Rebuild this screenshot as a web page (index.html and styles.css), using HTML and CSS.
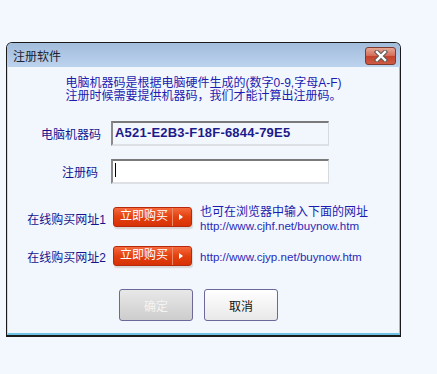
FILE: index.html
```html
<!DOCTYPE html>
<html lang="zh-cn">
<head>
  <meta charset="UTF-8">
  <title>注册软件</title>
  <link rel="stylesheet" href="styles.css">
</head>
<body>

  <div class="window">
    <div class="title-bar">
      <span class="title">注册软件</span>
      <button class="close-btn">
        <svg width="16" height="12" viewBox="0 0 16 12">
          <path d="M4 2 L12 10 M12 2 L4 10" stroke="#5a5a5a" stroke-width="4.4" stroke-linecap="square"/>
          <path d="M4 2 L12 10 M12 2 L4 10" stroke="#fff" stroke-width="2.4" stroke-linecap="square"/>
        </svg>
      </button>
    </div>

    <div class="content">
      <div class="notice">
        <div>电脑机器码是根据电脑硬件生成的(数字0-9,字母A-F)</div>
        <div>注册时候需要提供机器码，我们才能计算出注册码。</div>
      </div>

      <div class="field-row">
        <label class="field-label">电脑机器码</label>
        <div class="field-box machine-code">A521-E2B3-F18F-6844-79E5</div>
      </div>

      <div class="field-row second">
        <label class="field-label short">注册码</label>
        <div class="field-box reg-code"><span class="caret"></span></div>
      </div>

      <div class="buy-row">
        <span class="buy-label">在线购买网址1</span>
        <a class="buy-btn" href="#"><span class="buy-text">立即购买</span><span class="buy-arrow"></span></a>
        <div class="buy-info">
          <div class="hint">也可在浏览器中输入下面的网址</div>
          <div class="url">http://www.cjhf.net/buynow.htm</div>
        </div>
      </div>

      <div class="buy-row second">
        <span class="buy-label">在线购买网址2</span>
        <a class="buy-btn" href="#"><span class="buy-text">立即购买</span><span class="buy-arrow"></span></a>
        <div class="buy-info">
          <div class="url single">http://www.cjyp.net/buynow.htm</div>
        </div>
      </div>

      <div class="actions">
        <button class="dlg-btn disabled">确定</button>
        <button class="dlg-btn">取消</button>
      </div>
    </div>
  </div>

</body>
</html>
```

FILE: styles.css
```css
* {
  margin: 0;
  padding: 0;
  box-sizing: border-box;
}

body {
  font-family: "Liberation Sans", "Noto Sans CJK SC", sans-serif;
  font-size: 12px;
  background-color: #f3f8fe;
  color: #1a1a9a;
  padding: 42px 0 0 6px;
}

.window {
  width: 395px;
  height: 295px;
  border: 1px solid #1a1a1a;
  border-bottom-width: 2px;
  border-radius: 6px 6px 0 0;
  background-color: #f2f7fd;
  display: flex;
  flex-direction: column;
  overflow: hidden;
}

.title-bar {
  height: 24px;
  background: linear-gradient(#a2bcdb, #bcd3ee);
  display: flex;
  align-items: center;
  justify-content: space-between;
  padding: 0 4px 0 6px;
}

.title {
  color: #1b2433;
  font-size: 12px;
}

.close-btn {
  width: 31px;
  height: 18px;
  margin-top: 1px;
  border: 1px solid #7d3a2e;
  border-radius: 3px;
  background: linear-gradient(#e7a796, #d46a55 50%, #c3412a 51%, #cf5a43);
  display: flex;
  align-items: center;
  justify-content: center;
}

.content {
  flex: 1;
  border-left: 1px solid #c3dcef;
  border-right: 1px solid #7cc6e6;
  border-bottom: 2px solid #6ec2e4;
  padding-top: 10px;
}

.notice {
  text-align: center;
  line-height: 13px;
  color: #1c1cb0;
}

.field-row {
  display: flex;
  align-items: center;
  margin-top: 18px;
}

.field-row.second {
  margin-top: 13px;
}

.field-label {
  width: 93px;
  text-align: right;
  margin-right: 10px;
  color: #14148e;
}

.field-label.short {
  padding-right: 3px;
}

.field-box {
  width: 218px;
  height: 25px;
  border-top: 2px solid #7a7a7a;
  border-left: 2px solid #8a8a8a;
  border-right: 1px solid #d6dade;
  border-bottom: 2px solid #dde0e4;
  display: flex;
  align-items: center;
  padding-left: 2px;
}

.machine-code {
  background-color: #f2f7fd;
  font-weight: bold;
  font-size: 13px;
  color: #1c1a8a;
  letter-spacing: 0.2px;
  padding-bottom: 3px;
}

.reg-code {
  background-color: #fff;
}

.caret {
  width: 1px;
  height: 14px;
  background-color: #000;
  margin-bottom: 3px;
}

.buy-row {
  display: flex;
  align-items: flex-start;
  margin-top: 22px;
  height: 26px;
}

.buy-row.second {
  margin-top: 13px;
  height: 21px;
}

.buy-label {
  width: 98px;
  text-align: right;
  line-height: 13px;
  margin-top: 8px;
  margin-right: 7px;
  color: #14148e;
}

.buy-row.second .buy-label {
  margin-top: 7px;
}

.buy-btn {
  width: 79px;
  height: 20px;
  margin-top: 1px;
  border: 1px solid #b8280a;
  border-radius: 3px;
  background: linear-gradient(#f56a3c, #e4400f 50%, #d63205);
  box-shadow: 1px 2px 1px #d8d8d8;
  display: flex;
  align-items: center;
  text-decoration: none;
}

.buy-text {
  width: 59px;
  height: 100%;
  border-right: 1px solid #f08a64;
  color: #fff;
  font-size: 12px;
  text-align: center;
  line-height: 17px;
  padding-left: 2px;
}

.buy-arrow {
  width: 0;
  height: 0;
  margin-left: 6px;
  border-top: 3px solid transparent;
  border-bottom: 3px solid transparent;
  border-left: 4px solid #fff;
}

.buy-info {
  margin-left: 8px;
  line-height: 13px;
}

.hint {
  color: #1c1cb0;
}

.url {
  font-size: 11.6px;
  color: #2a2ab8;
}

.url.single {
  margin-top: 5px;
}

.actions {
  display: flex;
  gap: 11px;
  padding-left: 111px;
  margin-top: 23px;
}

.dlg-btn {
  width: 74px;
  height: 32px;
  border: 1px solid #6c6899;
  border-radius: 3px;
  background: linear-gradient(#ffffff, #e8e8e8);
  font-family: "Liberation Sans", "Noto Sans CJK SC", sans-serif;
  font-size: 12px;
  color: #111;
}

.dlg-btn.disabled {
  background: linear-gradient(#e8e8e8, #cdcdcd);
  color: #f4f4f4;
}
```
